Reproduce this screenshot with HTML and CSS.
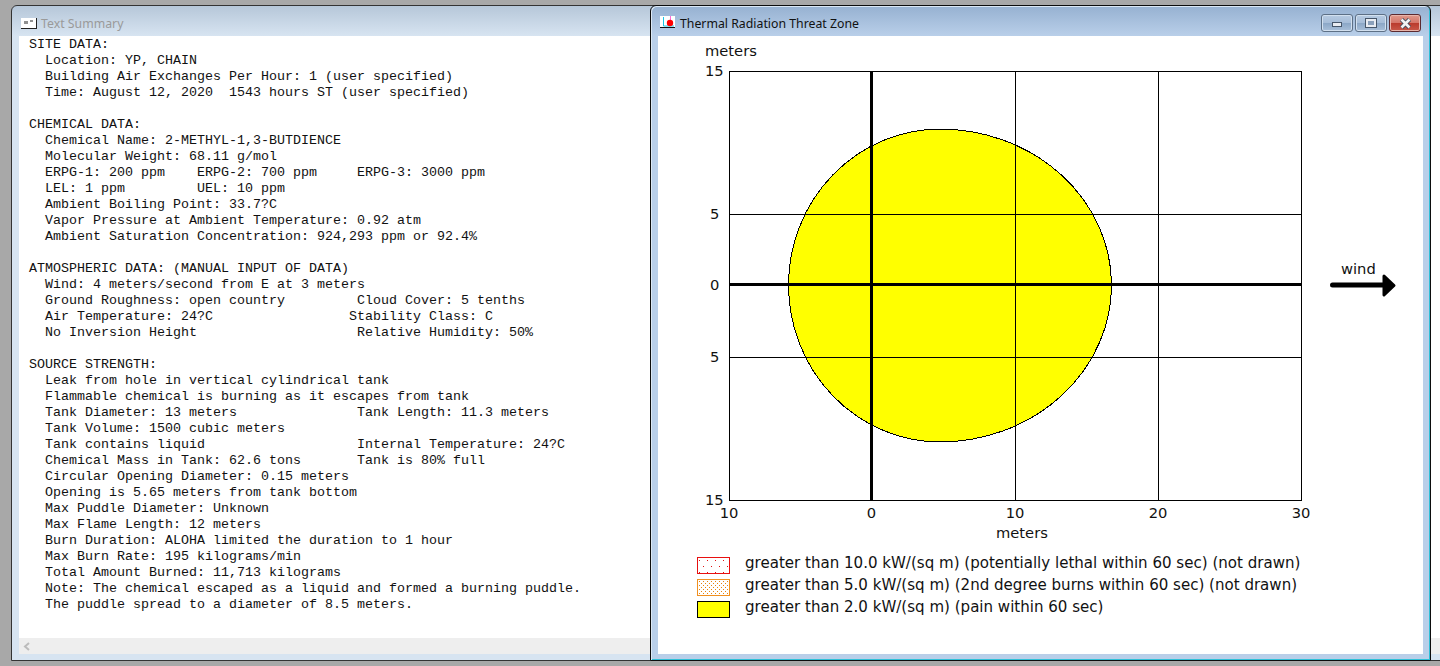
FILE: index.html
```html
<!DOCTYPE html>
<html lang="en">
<head>
	<meta charset="UTF-8">
	<title>Thermal Radiation Threat Zone</title>
	<link rel="stylesheet" href="styles.css">
</head>
<body>

<!-- text window, runs past the right edge of the screen -->
<div class="win win_back">
	<div class="title_bar">
		<svg class="title_icon" width="16" height="11" viewBox="0 0 16 11">
			<rect x="0" y="0" width="15" height="10" fill="#fff"/>
			<path d="M0 10.5H16M15.5 0V11" stroke="#222"/>
			<path d="M4 3V6M6 3V6M9 3H12" stroke="#222"/>
		</svg>
		<span class="title_txt">Text Summary</span>
	</div>
	<div class="client client_txt">
<pre class="summary">SITE DATA:
  Location: YP, CHAIN
  Building Air Exchanges Per Hour: 1 (user specified)
  Time: August 12, 2020  1543 hours ST (user specified)

CHEMICAL DATA:
  Chemical Name: 2-METHYL-1,3-BUTDIENCE
  Molecular Weight: 68.11 g/mol
  ERPG-1: 200 ppm    ERPG-2: 700 ppm     ERPG-3: 3000 ppm
  LEL: 1 ppm         UEL: 10 ppm
  Ambient Boiling Point: 33.7?C
  Vapor Pressure at Ambient Temperature: 0.92 atm
  Ambient Saturation Concentration: 924,293 ppm or 92.4%

ATMOSPHERIC DATA: (MANUAL INPUT OF DATA)
  Wind: 4 meters/second from E at 3 meters
  Ground Roughness: open country         Cloud Cover: 5 tenths
  Air Temperature: 24?C                 Stability Class: C
  No Inversion Height                    Relative Humidity: 50%

SOURCE STRENGTH:
  Leak from hole in vertical cylindrical tank
  Flammable chemical is burning as it escapes from tank
  Tank Diameter: 13 meters               Tank Length: 11.3 meters
  Tank Volume: 1500 cubic meters
  Tank contains liquid                   Internal Temperature: 24?C
  Chemical Mass in Tank: 62.6 tons       Tank is 80% full
  Circular Opening Diameter: 0.15 meters
  Opening is 5.65 meters from tank bottom
  Max Puddle Diameter: Unknown
  Max Flame Length: 12 meters
  Burn Duration: ALOHA limited the duration to 1 hour
  Max Burn Rate: 195 kilograms/min
  Total Amount Burned: 11,713 kilograms
  Note: The chemical escaped as a liquid and formed a burning puddle.
  The puddle spread to a diameter of 8.5 meters.</pre>
		<div class="h_scroll">
			<svg width="8" height="9" viewBox="0 0 8 9"><path d="M6 1L2 4.5L6 8" fill="none" stroke="#bcbcbc" stroke-width="2"/></svg>
		</div>
	</div>
</div>

<!-- threat zone window -->
<div class="win win_front">
	<div class="title_bar">
		<svg class="title_icon icon_chart" width="16" height="12" viewBox="0 0 16 12">
			<rect x="0" y="0" width="15" height="11" fill="#fff"/>
			<path d="M3.5 1V10H14" stroke="#19c6e6" fill="none"/>
			<path d="M10.5 0V6" stroke="#ff6ad5"/>
			<circle cx="10" cy="7" r="3.2" fill="#f00"/>
			<path d="M0 11.5H15" stroke="#111"/>
		</svg>
		<span class="title_txt">Thermal Radiation Threat Zone</span>
		<div class="win_btns">
			<span class="win_btn"><i class="ico_min"></i></span>
			<span class="win_btn"><i class="ico_max"></i></span>
			<span class="win_btn btn_close">
				<svg width="13" height="11" viewBox="0 0 13 11"><path d="M2.5 1.5L10.5 9.5M10.5 1.5L2.5 9.5" stroke="#3c4a5c" stroke-width="4.4"/><path d="M2.5 1.5L10.5 9.5M10.5 1.5L2.5 9.5" stroke="#f2f2f2" stroke-width="2.6"/></svg>
			</span>
		</div>
	</div>
	<div class="client client_chart">
		<svg class="chart" width="765" height="521" viewBox="658 36 765 521">
			<path class="zone" d="M788.5 285A152 156 0 0 1 940 129A172 156 0 0 1 1111.5 285A172 157 0 0 1 940 442A152 157 0 0 1 788.5 285Z"/>
			<rect class="grid" x="729.5" y="71.5" width="572" height="429"/>
			<path class="grid" d="M1015.5 72V500M1158.5 72V500M730 214.5H1301M730 357.5H1301"/>
			<path class="axis" d="M871.5 72V500M730 284.5H1301"/>
			<text x="705" y="56">meters</text>
			<text x="705" y="76">15</text>
			<text x="710" y="219">5</text>
			<text x="710" y="290">0</text>
			<text x="710" y="362">5</text>
			<text x="705" y="505">15</text>
			<text x="729" y="518" text-anchor="middle">10</text>
			<text x="871.5" y="518" text-anchor="middle">0</text>
			<text x="1015" y="518" text-anchor="middle">10</text>
			<text x="1158" y="518" text-anchor="middle">20</text>
			<text x="1301" y="518" text-anchor="middle">30</text>
			<text x="996" y="538">meters</text>
			<text x="1341" y="274">wind</text>
			<path class="wind_shaft" d="M1332.5 285H1386"/>
			<polygon class="wind_head" points="1384,276 1394,285.5 1384,295"/>
		</svg>
		<ul class="legend">
			<li class="legend_row"><span class="swatch sw_red"></span>greater than 10.0 kW/(sq m) (potentially lethal within 60 sec) (not drawn)</li>
			<li class="legend_row"><span class="swatch sw_orange"></span>greater than 5.0 kW/(sq m) (2nd degree burns within 60 sec) (not drawn)</li>
			<li class="legend_row"><span class="swatch sw_yellow"></span>greater than 2.0 kW/(sq m) (pain within 60 sec)</li>
		</ul>
	</div>
</div>

</body>
</html>
```

FILE: styles.css
```css
*{margin:0; padding:0; box-sizing:border-box;}
html,body{height:100%; overflow:hidden;}
body{background:#a8a8a8; font-family:"DejaVu Sans",sans-serif;}

/* windows on the desktop */
.win{position:absolute; top:5px; display:flex; flex-direction:column; border:1px solid #333; border-radius:6px 6px 0 0;}
.win_back{left:11px; width:1500px; height:656px; padding:0 7px 6px; background:#d7e4f1; background-image:linear-gradient(#b6c7d9,#d7e4f1 30px,#d7e4f1);}
.win_front{left:650px; width:781px; height:656px; padding:0 7px 6px; border-color:#0c0c0c; background:#b9cfe9; background-image:linear-gradient(#96b1d1,#b9cfe9 30px,#b9cfe9); box-shadow:inset 1px 1px 0 #dbe8f5, inset -1px -1px 0 #2fc0d8;}

.title_bar{display:flex; align-items:center; height:30px; padding-top:5px; flex:none;}
.title_icon{flex:none; margin:0 4px 0 2px;}
.icon_chart{margin-top:-3px;}
.title_txt{font-family:"Noto Sans",sans-serif; font-size:12.3px; color:#111;}
.win_back .title_txt{color:#9a9a9a;}

/* caption buttons */
.win_btns{display:flex; gap:2px; margin-left:auto; margin-right:2px; align-self:flex-start; margin-top:3px;}
.win_btn{display:flex; align-items:center; justify-content:center; width:32px; height:18px; border:1px solid #5d7086; border-radius:3px; background:linear-gradient(#b7cbe2 0,#a6bdd8 48%,#8aa6c6 50%,#a9c0da 100%); box-shadow:inset 0 0 0 1px #d2e0ef;}
.btn_close{border-color:#5c2a30; background:linear-gradient(#df9a8c 0,#d5766a 48%,#b93a2c 50%,#c9594a 100%); box-shadow:inset 0 0 0 1px #e8b5ab;}
.ico_min{display:block; width:10px; height:5px; margin-top:3px; background:#e8ecf2; border:1px solid #46566a;}
.ico_max{display:block; width:10px; height:8px; background:#8aa0bb; border:2px solid #e8ecf2; outline:1px solid #46566a;}

.client{background:#fff; flex:1; min-height:0;}

/* text summary */
.client_txt{display:flex; flex-direction:column;}
.summary{flex:1; padding:1px 0 0 10px; font-family:"Liberation Mono",monospace; font-size:13.33px; line-height:16px; color:#111; overflow:hidden;}
.h_scroll{display:flex; align-items:center; height:16px; flex:none; background:#eee; padding-left:4px;}

/* chart */
.chart{display:block;}
.chart text{font-family:"DejaVu Sans",sans-serif; font-size:14.7px; fill:#111;}
.zone{fill:#ff0; stroke:#000; stroke-width:1; shape-rendering:crispEdges;}
.grid{fill:none; stroke:#000; stroke-width:1;}
.axis{fill:none; stroke:#000; stroke-width:3;}
.wind_shaft{fill:none; stroke:#000; stroke-width:5; stroke-linecap:round;}
.wind_head{fill:#000; stroke:#000; stroke-width:3; stroke-linejoin:round;}

/* legend */
.legend{list-style:none; display:flex; flex-direction:column; gap:5px; padding-left:39px;}
.legend_row{display:flex; align-items:flex-start; gap:15px; height:17px; font-size:15.05px; line-height:12px; color:#111; white-space:nowrap;}
.swatch{flex:none; width:33px; height:17px; border:1px solid #000;}
.sw_red{border-color:#e81010; background:#fff; background-image:radial-gradient(circle at 1.5px 2.5px,#e01010 .7px,transparent .8px),radial-gradient(circle at 5.5px 8.5px,#e01010 .7px,transparent .8px); background-size:8px 12px;}
.sw_orange{border-color:#f09020; background:#fff; background-image:radial-gradient(circle at 1.5px 1.5px,#e8820c .8px,transparent .9px),radial-gradient(circle at 3.5px 3.5px,#e8820c .8px,transparent .9px); background-size:4px 4px;}
.sw_yellow{background:#ff0;}
```
